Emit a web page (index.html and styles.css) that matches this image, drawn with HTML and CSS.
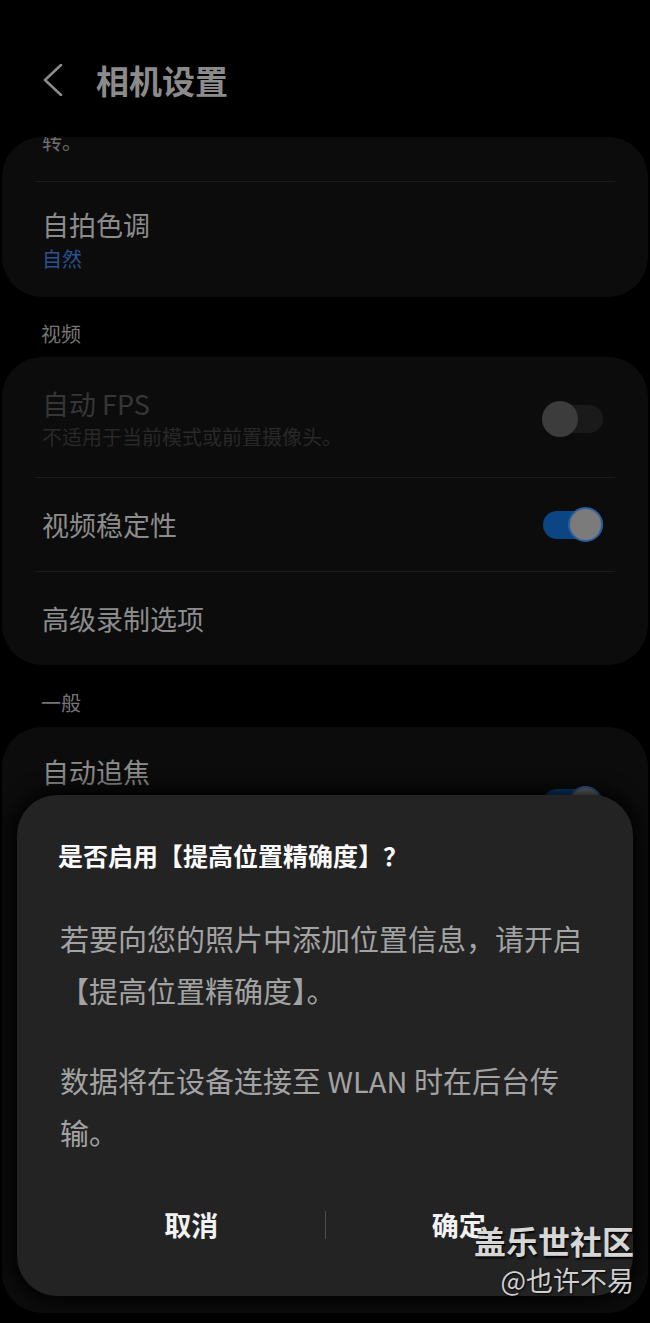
FILE: index.html
```html
<!DOCTYPE html>
<html lang="zh-CN">
<head>
<meta charset="utf-8">
<title>相机设置</title>
<link rel="stylesheet" href="styles.css">
</head>
<body>
<div class="screen">
  <header class="appbar">
    <svg class="back" width="22" height="32" viewBox="0 0 22 32"><polyline points="19,1 3,16 19,31" fill="none" stroke="#8a8a8a" stroke-width="2.6" stroke-linecap="round" stroke-linejoin="round"/></svg>
    <h1 class="appbar-title">相机设置</h1>
  </header>

  <main class="list">
    <section class="card">
      <div class="clip-row"><span>转。</span></div>
      <div class="divider"></div>
      <div class="row two-line">
        <div class="texts">
          <div class="title">自拍色调</div>
          <div class="sub blue">自然</div>
        </div>
      </div>
    </section>

    <div class="section-label">视频</div>
    <section class="card">
      <div class="row two-line fps">
        <div class="texts">
          <div class="title disabled">自动 FPS</div>
          <div class="sub disabled-sub">不适用于当前模式或前置摄像头。</div>
        </div>
        <div class="toggle off"><div class="thumb"></div></div>
      </div>
      <div class="divider"></div>
      <div class="row single">
        <div class="title">视频稳定性</div>
        <div class="toggle on"><div class="thumb"></div></div>
      </div>
      <div class="divider"></div>
      <div class="row single">
        <div class="title">高级录制选项</div>
      </div>
    </section>

    <div class="section-label second">一般</div>
    <section class="card last-card">
      <div class="row tall">
        <div class="title">自动追焦</div>
        <div class="toggle on low"><div class="thumb"></div></div>
      </div>
    </section>
  </main>

  <div class="dialog">
    <div class="dialog-title">是否启用【提高位置精确度】？</div>
    <div class="dialog-body">
      <p>若要向您的照片中添加位置信息，请开启【提高位置精确度】。</p>
      <p>数据将在设备连接至 WLAN 时在后台传输。</p>
    </div>
    <div class="dialog-actions">
      <div class="action">取消</div>
      <div class="action-sep"></div>
      <div class="action">确定</div>
    </div>
  </div>

  <div class="watermark">
    <div class="wm-main">盖乐世社区</div>
    <div class="wm-sub">@也许不易</div>
  </div>
</div>
</body>
</html>
```

FILE: styles.css
```css
* { box-sizing: border-box; }

html, body {
  margin: 0;
  padding: 0;
  background: #000;
}

body {
  font-family: "Noto Sans CJK SC", "Noto Sans", sans-serif;
}

.screen {
  position: relative;
  width: 650px;
  height: 1323px;
  overflow: hidden;
  background: #000;
}

/* App bar */
.appbar {
  display: flex;
  align-items: center;
  gap: 32px;
  padding: 60px 0 37px 42px;
}
.back { display: block; }
.appbar-title {
  margin: 0;
  font-size: 33px;
  line-height: 40px;
  font-weight: 700;
  color: #8b8b8b;
}

/* List */
.list {
  display: flex;
  flex-direction: column;
}

.card {
  margin: 0 2px;
  background: #0c0c0c;
  border-radius: 40px;
  overflow: hidden;
  display: flex;
  flex-direction: column;
}

.last-card { min-height: 586px; }

.clip-row {
  height: 44px;
  padding-left: 40px;
  overflow: hidden;
}
.clip-row span {
  display: block;
  margin-top: -6px;
  font-size: 20px;
  line-height: 22px;
  color: #6e6e6e;
}

.divider {
  height: 1px;
  margin: 0 33px;
  background: #1b1b1b;
}

.row {
  display: flex;
  align-items: center;
  justify-content: space-between;
  padding: 0 45px 0 40px;
}
.row.single { height: 93px; }
.row.two-line { padding-top: 26px; padding-bottom: 25px; }
.row.two-line.fps { padding-top: 30px; padding-bottom: 27px; }
.row.tall {
  align-items: flex-start;
  padding-top: 28px;
}

.texts {
  display: flex;
  flex-direction: column;
  gap: 4px;
}
.row.two-line.fps .texts { gap: 3px; }

.title {
  font-size: 27px;
  line-height: 34px;
  color: #8c8c8c;
}
.title.disabled { color: #363636; }

.sub {
  font-size: 20px;
  line-height: 26px;
}
.sub.blue { color: #2b5293; }
.sub.disabled-sub { color: #282828; }

.section-label {
  padding: 23px 0 9px 41px;
  font-size: 20px;
  line-height: 28px;
  color: #757575;
}
.section-label.second { padding-top: 24px; padding-bottom: 10px; }

/* Toggle */
.toggle {
  position: relative;
  width: 61px;
  height: 36px;
  display: flex;
  align-items: center;
  flex-shrink: 0;
}
.toggle.low { margin-top: 30px; }
.toggle::before {
  content: "";
  position: absolute;
  left: 1px;
  right: 0;
  top: 4px;
  bottom: 4px;
  border-radius: 14px;
}
.toggle .thumb {
  position: relative;
  width: 36px;
  height: 36px;
  border-radius: 50%;
}
.toggle.off { justify-content: flex-start; }
.toggle.off::before { background: #1a1a1a; }
.toggle.off .thumb { background: #3c3c3c; }
.toggle.on { justify-content: flex-end; }
.toggle.on::before { background: #0b4583; }
.toggle.on .thumb {
  width: 35px;
  height: 35px;
  background: #7b7b7b;
  border: 2px solid #2d5f9e;
}

/* Dialog */
.dialog {
  position: absolute;
  left: 17px;
  top: 795px;
  width: 616px;
  height: 501px;
  padding: 44px 41px 41px;
  background: #232323;
  border-radius: 40px;
  box-shadow: 0 0 18px 6px rgba(0, 0, 0, 0.85);
  display: flex;
  flex-direction: column;
}
.dialog-title {
  font-size: 25px;
  line-height: 32px;
  font-weight: 700;
  color: #fafafa;
}
.dialog-body {
  margin-top: 41px;
  padding-left: 2px;
}
.dialog-body p {
  margin: 0;
  font-size: 29px;
  line-height: 52px;
  color: #a3a3a3;
}
.dialog-body p + p { margin-top: 38px; }

.dialog-actions {
  margin-top: 37px;
  height: 60px;
  display: flex;
  align-items: center;
}
.action {
  flex: 1;
  text-align: center;
  font-size: 27px;
  line-height: 36px;
  font-weight: 700;
  color: #f2f2f2;
}
.action-sep {
  width: 1px;
  height: 28px;
  background: #4e4e4e;
}

/* Watermark */
.watermark {
  position: absolute;
  right: 16px;
  top: 1220px;
  display: flex;
  flex-direction: column;
  align-items: flex-end;
}
.wm-main {
  font-size: 32px;
  line-height: 40px;
  font-weight: 700;
  color: #d6d6d6;
  text-shadow: 1px 2px 2px rgba(0, 0, 0, 0.9);
}
.wm-sub {
  margin-top: 2px;
  font-size: 27px;
  line-height: 36px;
  color: #cfcfcf;
  text-shadow: 1px 1px 2px rgba(0, 0, 0, 0.9);
}
```
